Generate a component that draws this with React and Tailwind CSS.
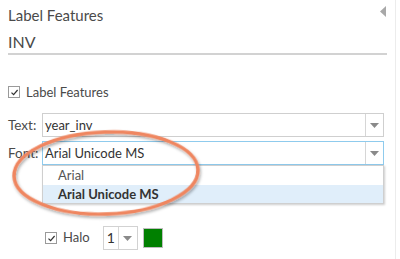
import React from 'react'

const font = { fontFamily: 'Lato, "Liberation Sans", sans-serif' }

const Check = ({ className = '' }) => (
    <span className={`flex items-center justify-center w-[12px] h-[12px] border border-[#9a9a9a] bg-white ${className}`}>
        <svg width="9" height="9" viewBox="0 0 9 9">
            <path d="M1.5 4.6 L3.6 6.7 L7.6 2" fill="none" stroke="#333" strokeWidth="1.2" />
        </svg>
    </span>
)

const Caret = () => (
    <svg width="9" height="5" viewBox="0 0 9 5">
        <path d="M0 0 H9 L4.5 5 Z" fill="#8a8a8a" />
    </svg>
)

const App = () => {
    return (
        <div className="relative w-[400px] h-[259px] bg-white overflow-hidden text-[#4a4a4a]" style={font}>
            <div className="w-[396px] h-full border-r border-[#ececec]">
                {/* header */}
                <div className="px-2">
                    <div className="flex justify-between items-start">
                        <div className="mt-[5px] text-[15px] leading-5">Label Features</div>
                        <svg className="mt-[6px] mr-[1px]" width="6" height="11" viewBox="0 0 6 11">
                            <path d="M6 0 V11 L0 5.5 Z" fill="#a8a8a8" />
                        </svg>
                    </div>
                    <div className="mt-[7px] text-[16px] leading-5">INV</div>
                    <div className="mt-[1px] h-[2px] bg-[#d2d2d2]" />
                </div>

                <div className="pl-2 pr-[11px]">
                    <label className="mt-[29px] flex items-center gap-[6px] text-[13px] leading-4">
                        <Check />
                        <span>Label Features</span>
                    </label>

                    <div className="mt-[13px] flex items-center">
                        <span className="w-[34px] text-[13.5px]">Text:</span>
                        <div className="flex-1 flex h-[24px] border border-[#cfcfcf]">
                            <div className="flex-1 pl-[2px] text-[13px] leading-[22px] text-[#333]">year_inv</div>
                            <div className="w-[18px] flex items-center justify-center border-l border-[#d6d6d6]">
                                <Caret />
                            </div>
                        </div>
                    </div>

                    <div className="mt-[4px] flex items-center">
                        <span className="w-[34px] text-[13.5px]">Font:</span>
                        <div className="relative flex-1 flex h-[24px] border border-[#8fcbed]">
                            <div className="flex-1 pl-[2px] text-[13px] leading-[22px] text-[#333]">Arial Unicode MS</div>
                            <div className="w-[18px] flex items-center justify-center border-l border-[#d6d6d6]">
                                <Caret />
                            </div>
                            <div className="absolute left-[-1px] right-[-1px] top-[23px] border border-[#cfcfcf] bg-white shadow-[1px_1px_2px_rgba(0,0,0,0.2)] text-[13px]">
                                <div className="h-[19px] pl-[15px] leading-[19px] text-[#555]">Arial</div>
                                <div className="h-[18px] pl-[15px] leading-[18px] font-bold text-[#333] bg-[#e0eefa]">Arial Unicode MS</div>
                            </div>
                        </div>
                    </div>

                    <div className="mt-[61px] ml-[37px] flex items-center">
                        <Check />
                        <span className="ml-[6px] text-[13px]">Halo</span>
                        <div className="ml-[13px] flex h-[24px] w-[35px] border border-[#d2d2d2]">
                            <div className="w-[14px] pl-[3px] text-[14px] leading-[22px] text-[#333]">1</div>
                            <div className="flex-1 flex items-center justify-center border-l border-[#d6d6d6]">
                                <Caret />
                            </div>
                        </div>
                        <div className="ml-[5px] w-[20px] h-[20px] bg-[#008000] border border-[#bdbdbd]" />
                    </div>
                </div>
            </div>

            {/* highlight */}
            <svg className="absolute left-0 top-0 pointer-events-none" width="400" height="259">
                <defs>
                    <filter id="sh" x="-10%" y="-20%" width="120%" height="140%">
                        <feDropShadow dx="1" dy="2" stdDeviation="1.5" floodColor="#000" floodOpacity="0.35" />
                    </filter>
                </defs>
                <ellipse cx="106" cy="173" rx="92" ry="41" transform="rotate(-2 106 173)" fill="none" stroke="#ef8660" strokeWidth="3.5" filter="url(#sh)" />
            </svg>
        </div>
    )
}

export default App
